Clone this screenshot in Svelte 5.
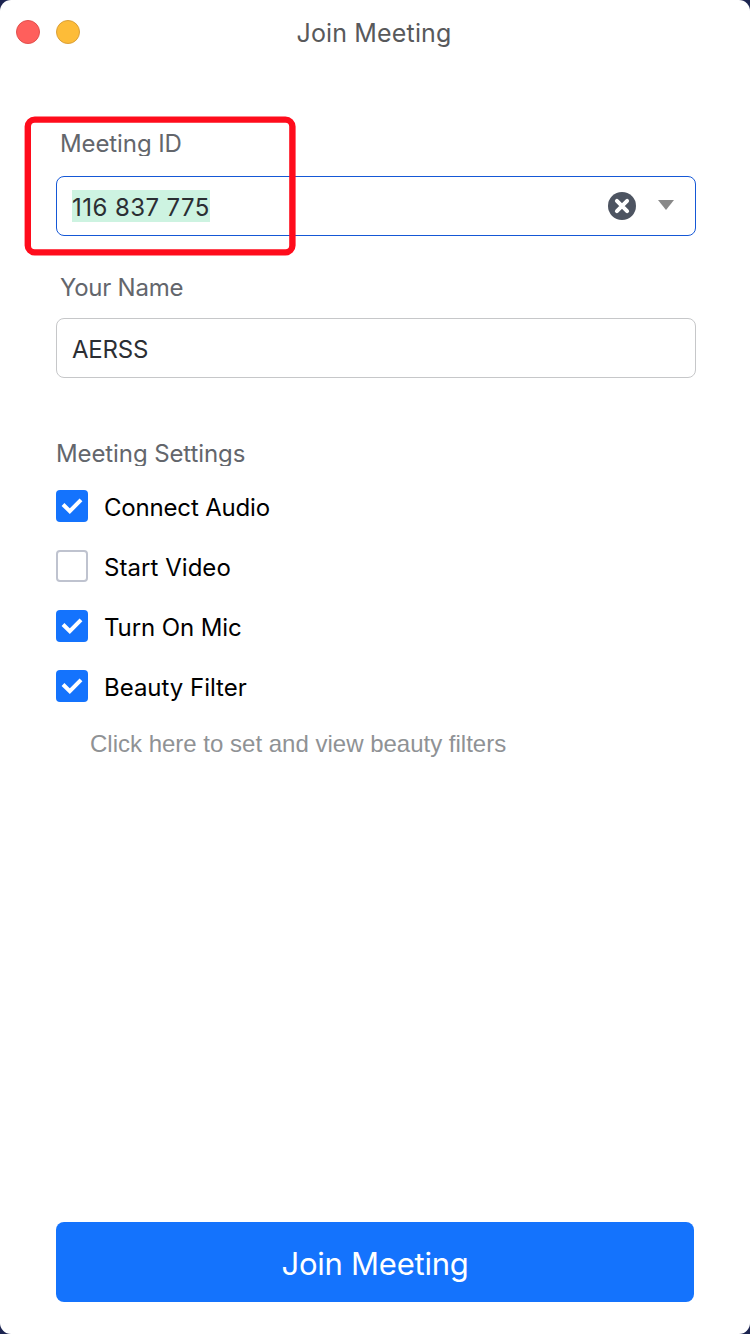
<script>
  let meetingId = $state('116 837 775');
  let name = $state('AERSS');
  let settings = $state([
    { label: 'Connect Audio', on: true, spacing: -0.18 },
    { label: 'Start Video', on: false, spacing: 0.05 },
    { label: 'Turn On Mic', on: true, spacing: -0.1 },
    { label: 'Beauty Filter', on: true, spacing: -0.02 },
  ]);
</script>

<main class="window">
  <header class="titlebar">
    <div class="lights">
      <span class="light close"></span>
      <span class="light minimize"></span>
    </div>
    <h1>Join Meeting</h1>
  </header>

  <section class="form">
    <div class="label id-label">Meeting ID</div>
    <div class="field active">
      <span class="selection">{meetingId}</span>
      <svg class="clear" width="28" height="28" viewBox="0 0 28 28">
        <circle cx="14" cy="14" r="14" fill="#4d5461" />
        <path d="M8.9 8.9 19.1 19.1M19.1 8.9 8.9 19.1" stroke="#fff" stroke-width="4" stroke-linecap="round" />
      </svg>
      <svg class="arrow" width="16" height="10" viewBox="0 0 16 10">
        <path d="M0 0H16L8 10Z" fill="#888" />
      </svg>
      <svg class="highlight" width="273" height="141" viewBox="0 0 273 141">
        <rect x="4.8" y="4.6" width="264.6" height="132.8" rx="7" fill="none" stroke="#ff0c1c" stroke-width="6.4" />
      </svg>
    </div>

    <div class="label name-label">Your Name</div>
    <div class="field"><span class="name">{name}</span></div>

    <div class="label settings-label">Meeting Settings</div>
    <div class="options">
      {#each settings as item}
        <button class="option" onclick={() => (item.on = !item.on)}>
          <span class="box" class:on={item.on}>
            {#if item.on}
              <svg width="32" height="32" viewBox="0 0 32 32">
                <path d="M7 14.5 13.8 21.2 25 9.8" fill="none" stroke="#fff" stroke-width="4" />
              </svg>
            {/if}
          </span>
          <span class="text" style="letter-spacing: {item.spacing}px">{item.label}</span>
        </button>
      {/each}
    </div>
    <div class="hint">Click here to set and view beauty filters</div>
  </section>

  <button class="join">Join Meeting</button>
</main>

<style>
  :global(body) {
    margin: 0;
    background: #1c2450;
  }
  .window {
    box-sizing: border-box;
    width: 750px;
    height: 1334px;
    display: flex;
    flex-direction: column;
    padding: 0 56px 32px;
    background: #fff;
    border-radius: 11px;
    font-family: Inter, "Liberation Sans", sans-serif;
    font-size: 24px;
    overflow: hidden;
  }
  .titlebar {
    display: grid;
    grid-template-columns: 80px 1fr 82px;
    align-items: center;
    height: 64px;
    margin: 0 -56px;
  }
  .lights {
    display: flex;
    gap: 16px;
    padding-left: 16px;
  }
  .light {
    box-sizing: border-box;
    flex: none;
    width: 24px;
    height: 24px;
    border-radius: 50%;
  }
  .close {
    background: #ff5f5c;
    border: 1px solid #e2504d;
  }
  .minimize {
    background: #fdbc38;
    border: 1px solid #dba038;
  }
  h1 {
    margin: 2px 0 0;
    font-size: 25px;
    font-weight: 400;
    line-height: 32px;
    text-align: center;
    color: #58595b;
    letter-spacing: 0.15px;
  }
  .form {
    flex: 1;
  }
  .label {
    padding-left: 4px;
    height: 28px;
    line-height: 30px;
    color: #63666c;
    overflow: hidden;
  }
  .id-label {
    margin-top: 65px;
    height: 27px;
    letter-spacing: -0.1px;
  }
  .name-label {
    margin-top: 37px;
    letter-spacing: -0.25px;
  }
  .settings-label {
    margin-top: 61px;
    padding-left: 0;
    height: 27px;
    letter-spacing: -0.1px;
  }
  .field {
    position: relative;
    box-sizing: border-box;
    display: flex;
    align-items: center;
    width: 640px;
    height: 60px;
    margin-top: 17px;
    padding: 0 21px 0 15px;
    border: 1px solid #c6c7c9;
    border-radius: 8px;
    color: #2b2e33;
  }
  .id-label + .field {
    margin-top: 20px;
  }
  .active {
    border-color: #1558d6;
  }
  .selection {
    height: 32px;
    line-height: 36px;
    letter-spacing: 0.43px;
    background: #cdf3e1;
  }
  .name {
    line-height: 32px;
    margin-top: 3px;
    letter-spacing: -0.2px;
  }
  .clear {
    margin-left: auto;
  }
  .arrow {
    margin: -2px 0 0 22px;
  }
  .highlight {
    position: absolute;
    left: -34px;
    top: -62px;
  }
  .options {
    display: flex;
    flex-direction: column;
    gap: 28px;
    margin-top: 24px;
  }
  button {
    border: 0;
    padding: 0;
    background: none;
    font: inherit;
  }
  .option {
    display: flex;
    align-items: center;
    gap: 16px;
    height: 32px;
    color: #000;
  }
  .box {
    box-sizing: border-box;
    flex: none;
    width: 32px;
    height: 32px;
    border: 2px solid #bfc3cf;
    border-radius: 4px;
  }
  .box.on {
    border: 0;
    background: #1473fd;
  }
  .box svg {
    display: block;
  }
  .text {
    line-height: 32px;
    margin-top: 3px;
  }
  .hint {
    margin: 27px 0 0 34px;
    font-family: "Liberation Sans", Arial, sans-serif;
    line-height: 30px;
    color: #8f9295;
  }
  .join {
    flex: none;
    height: 80px;
    padding-top: 4px;
    border-radius: 8px;
    background: #1473fd;
    color: #fff;
    font-size: 31px;
    line-height: 40px;
    letter-spacing: -0.25px;
  }
</style>
